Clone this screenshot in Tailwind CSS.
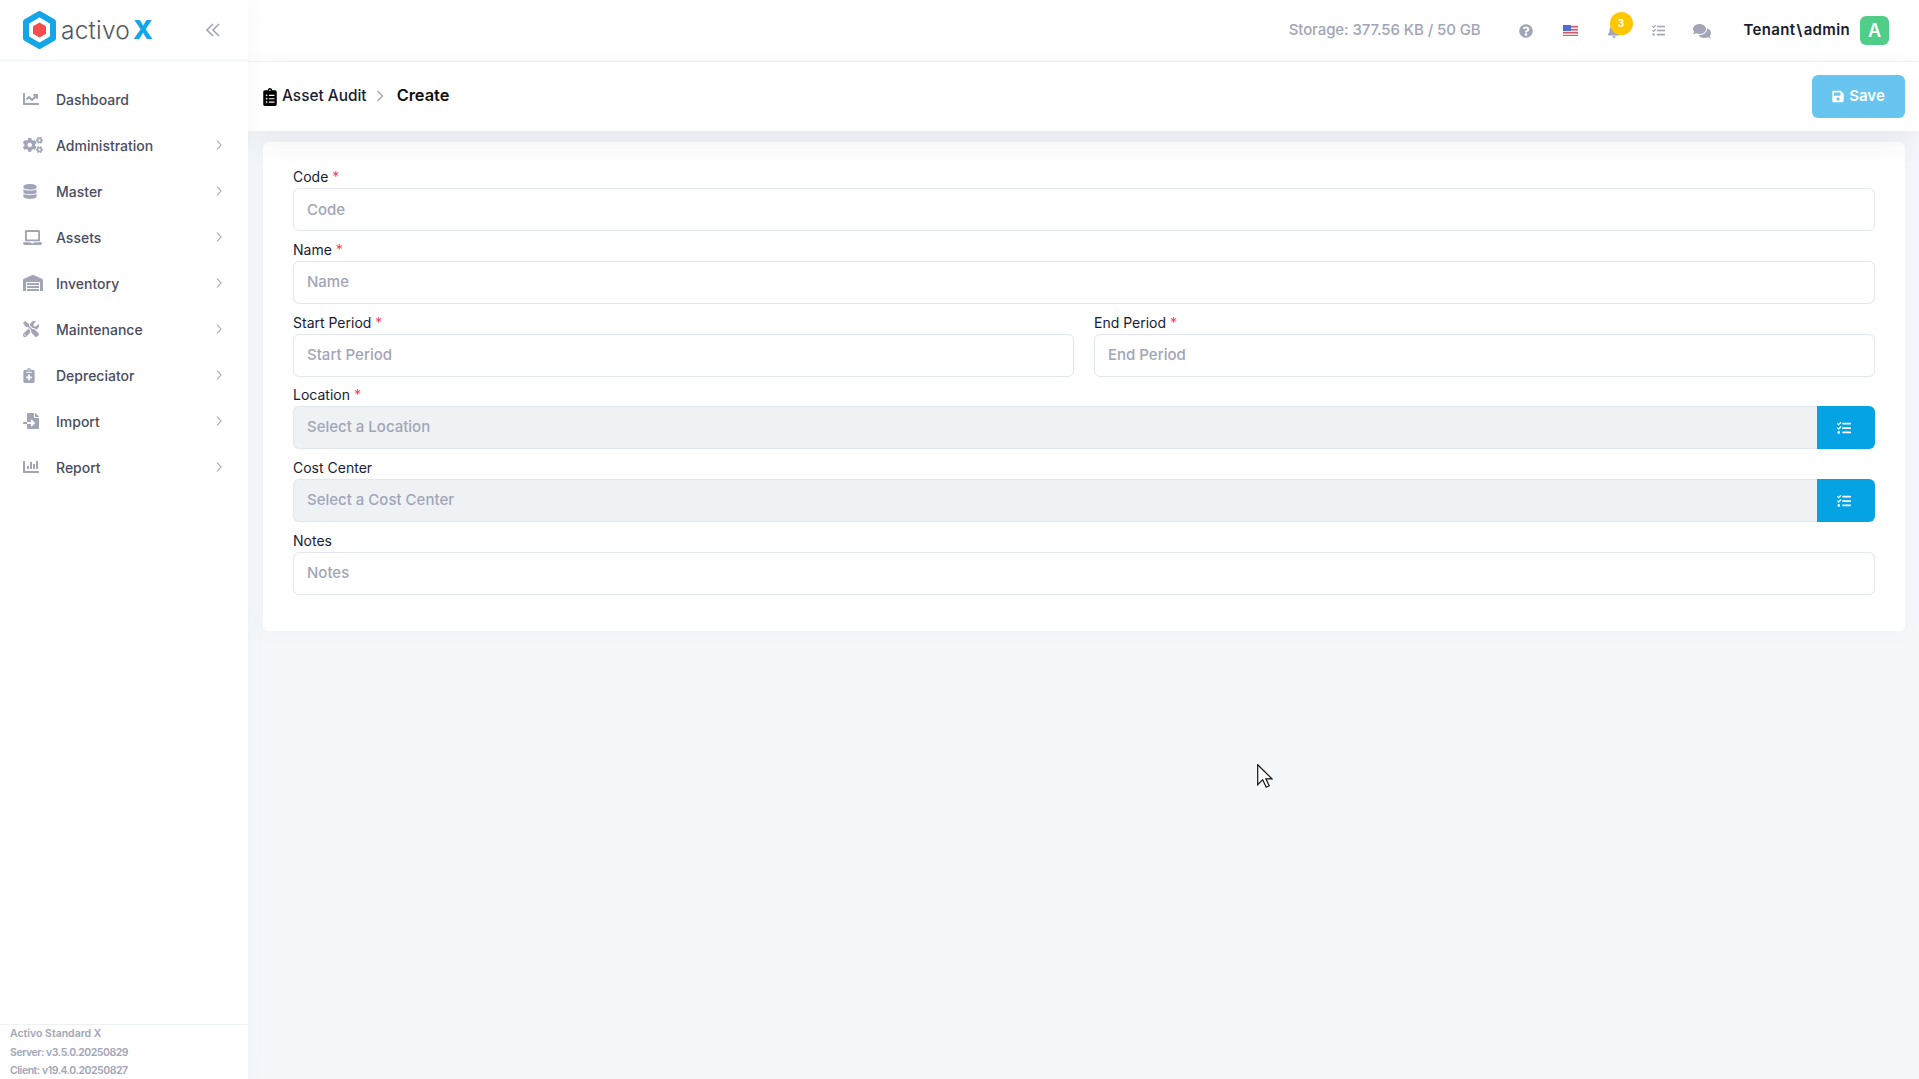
<!DOCTYPE html>
<html>
<head>
<meta charset="utf-8">
<script src="https://cdn.jsdelivr.net/npm/@tailwindcss/browser@4"></script>
</head>
<body class="font-['Inter','Noto_Sans',sans-serif] text-[#181c32]">
<div class="relative flex h-[1079px] w-[1919px] overflow-hidden bg-[#f5f8fb]">
  <aside class="z-10 flex h-full w-[248px] shrink-0 flex-col bg-white shadow-[0_0_20px_rgba(76,87,125,0.05)]">
    <div class="flex h-[61px] shrink-0 items-center border-b border-[#eff2f5] pl-[23px] pr-[28px]">
      <svg class="h-[38px] w-[33px] shrink-0" viewBox="0 0 33 38"><path d="M16.5 3 30 10.800v16.400L16.500 35 3 27.200V10.800z" fill="#fff" stroke="#12a5e8" stroke-width="6" stroke-linejoin="round"/><path d="M16.500 11.500 23 15.200v7.600l-6.500 3.700-6.500-3.700v-7.600z" fill="#f84b4b"/></svg>
      <span class="ml-[5px] text-[24.500px] leading-none font-light tracking-[0.2px] text-[#55565f]">activo</span><span class="ml-[3px] text-[26px] leading-none font-extrabold text-[#12a5e8]">X</span>
      <svg class="ml-auto h-[14px] w-[14px] text-[#a1a5b7]" viewBox="0 0 14 14" fill="none" stroke="currentColor" stroke-width="1.6"><path d="M7 1 1 7l6 6M13 1 7 7l6 6"/></svg>
    </div>
    <nav class="flex flex-col pt-[15px] text-[14px] font-medium text-[#4b4c5e]">
      <a class="flex h-[46px] items-center pl-[23px] pr-[26px]"><span class="flex w-[33px] shrink-0"><svg class="h-[16px] w-[16px] fill-[#a1a5b7]" viewBox="0 0 512 512"><path d="M496 384H64V80c0-8.84-7.16-16-16-16H16C7.16 64 0 71.16 0 80v336c0 17.67 14.33 32 32 32h464c8.84 0 16-7.16 16-16v-32c0-8.84-7.16-16-16-16zM464 96H345.94c-21.38 0-32.09 25.85-16.97 40.97l32.4 32.4L288 242.75l-73.37-73.37c-12.5-12.5-32.76-12.5-45.25 0l-68.69 68.69c-6.25 6.25-6.25 16.38 0 22.63l22.62 22.62c6.25 6.25 16.38 6.25 22.63 0L192 237.25l73.37 73.37c12.5 12.5 32.76 12.5 45.25 0l96-96 32.4 32.4c15.12 15.12 40.97 4.41 40.97-16.97V112c.01-8.84-7.15-16-15.99-16z"/></svg></span><span>Dashboard</span></a>
      <a class="flex h-[46px] items-center pl-[23px] pr-[26px]"><span class="flex w-[33px] shrink-0"><svg class="h-[16px] w-[20px] fill-[#a1a5b7]" viewBox="0 0 640 512"><path d="M512.1 191l-8.2 14.3c-3 5.3-9.4 7.5-15.1 5.4-11.8-4.4-22.6-10.7-32.1-18.6-4.6-3.8-5.8-10.5-2.8-15.7l8.2-14.3c-6.9-8-12.3-17.3-15.9-27.4h-16.5c-6 0-11.2-4.3-12.2-10.3-2-12-2.1-24.6 0-37.1 1-6 6.2-10.4 12.2-10.4h16.5c3.6-10.1 9-19.4 15.9-27.4l-8.2-14.3c-3-5.2-1.9-11.9 2.8-15.7 9.5-7.9 20.4-14.2 32.1-18.6 5.7-2.1 12.1.1 15.1 5.4l8.2 14.3c10.5-1.9 21.2-1.9 31.7 0L552 6.3c3-5.3 9.4-7.5 15.1-5.4 11.8 4.4 22.6 10.7 32.1 18.6 4.6 3.8 5.8 10.5 2.8 15.7l-8.2 14.3c6.9 8 12.3 17.3 15.9 27.4h16.5c6 0 11.2 4.3 12.2 10.3 2 12 2.1 24.6 0 37.1-1 6-6.2 10.4-12.2 10.4h-16.5c-3.6 10.1-9 19.4-15.9 27.4l8.2 14.3c3 5.2 1.9 11.9-2.8 15.7-9.5 7.9-20.4 14.2-32.1 18.6-5.7 2.1-12.1-.1-15.1-5.4l-8.2-14.3c-10.4 1.9-21.2 1.9-31.7 0zm-10.5-58.8c38.5 29.6 82.4-14.3 52.8-52.8-38.5-29.7-82.4 14.3-52.8 52.8zM386.3 286.1l33.7 16.8c10.1 5.8 14.5 18.1 10.5 29.1-8.9 24.2-26.4 46.4-42.6 65.8-7.4 8.9-20.2 11.1-30.3 5.3l-29.1-16.8c-16 13.7-34.6 24.6-54.9 31.7v33.6c0 11.6-8.3 21.6-19.7 23.6-24.6 4.2-50.4 4.4-75.9 0-11.5-2-20-11.9-20-23.6V418c-20.3-7.2-38.9-18-54.9-31.7L74 403c-10 5.8-22.9 3.6-30.3-5.3-16.2-19.4-33.3-41.6-42.2-65.7-4-10.9.4-23.2 10.5-29.1l33.3-16.8c-3.9-20.9-3.9-42.4 0-63.4L12 205.8c-10.1-5.8-14.6-18.1-10.5-29 8.9-24.2 26-46.4 42.2-65.8 7.4-8.9 20.2-11.1 30.3-5.3l29.1 16.8c16-13.7 34.6-24.6 54.9-31.7V57.1c0-11.5 8.2-21.5 19.6-23.5 24.6-4.2 50.5-4.4 76-.1 11.5 2 20 11.9 20 23.6v33.6c20.3 7.2 38.9 18 54.9 31.7l29.1-16.8c10-5.8 22.9-3.6 30.3 5.3 16.2 19.4 33.2 41.6 42.1 65.8 4 10.9.1 23.2-10 29.1l-33.7 16.8c3.9 21 3.9 42.5 0 63.5zm-117.6 21.1c59.2-77-28.7-164.9-105.7-105.7-59.2 77 28.7 164.9 105.7 105.7zm243.4 182.7l-8.2 14.3c-3 5.3-9.4 7.5-15.1 5.4-11.8-4.4-22.6-10.7-32.1-18.6-4.6-3.8-5.8-10.5-2.8-15.7l8.2-14.3c-6.9-8-12.3-17.3-15.9-27.4h-16.5c-6 0-11.2-4.3-12.2-10.3-2-12-2.1-24.6 0-37.1 1-6 6.2-10.4 12.2-10.4h16.5c3.6-10.1 9-19.4 15.9-27.4l-8.2-14.3c-3-5.2-1.9-11.9 2.8-15.7 9.5-7.9 20.4-14.2 32.1-18.6 5.7-2.1 12.1.1 15.1 5.4l8.2 14.3c10.5-1.9 21.2-1.9 31.7 0l8.2-14.3c3-5.3 9.4-7.5 15.1-5.4 11.8 4.4 22.6 10.7 32.1 18.6 4.6 3.8 5.8 10.5 2.8 15.7l-8.2 14.3c6.9 8 12.3 17.3 15.9 27.4h16.5c6 0 11.2 4.3 12.2 10.3 2 12 2.1 24.6 0 37.1-1 6-6.2 10.4-12.2 10.4h-16.5c-3.6 10.1-9 19.4-15.9 27.4l8.2 14.3c3 5.2 1.9 11.9-2.8 15.7-9.5 7.9-20.4 14.2-32.1 18.6-5.7 2.1-12.1-.1-15.1-5.4l-8.2-14.3c-10.4 1.9-21.2 1.9-31.7 0zM501.6 431c38.5 29.6 82.4-14.3 52.8-52.8-38.5-29.6-82.4 14.3-52.8 52.8z"/></svg></span><span>Administration</span><svg class="ml-auto h-[10px] w-[6px] text-[#a1a5b7]" viewBox="0 0 6 10" fill="none" stroke="currentColor" stroke-width="1.1"><path d="m1 .5 4 4.5-4 4.5"/></svg></a>
      <a class="flex h-[46px] items-center pl-[23px] pr-[26px]"><span class="flex w-[33px] shrink-0"><svg class="h-[15px] w-[14px] fill-[#a1a5b7]" viewBox="0 0 448 512"><path d="M448 73.143v45.714C448 159.143 347.667 192 224 192S0 159.143 0 118.857V73.143C0 32.857 100.333 0 224 0s224 32.857 224 73.143zM448 176v102.857C448 319.143 347.667 352 224 352S0 319.143 0 278.857V176c48.125 33.143 136.208 48.572 224 48.572S399.874 209.143 448 176zm0 160v102.857C448 479.143 347.667 512 224 512S0 479.143 0 438.857V336c48.125 33.143 136.208 48.572 224 48.572S399.874 369.143 448 336z"/></svg></span><span>Master</span><svg class="ml-auto h-[10px] w-[6px] text-[#a1a5b7]" viewBox="0 0 6 10" fill="none" stroke="currentColor" stroke-width="1.1"><path d="m1 .5 4 4.5-4 4.5"/></svg></a>
      <a class="flex h-[46px] items-center pl-[23px] pr-[26px]"><span class="flex w-[33px] shrink-0"><svg class="h-[15px] w-[19px] fill-[#a1a5b7]" viewBox="0 0 640 512"><path d="M624 416H381.54c-.74 19.81-14.71 32-32.74 32H288c-18.69 0-33.02-17.47-32.77-32H16c-8.8 0-16 7.2-16 16v16c0 35.2 28.8 64 64 64h512c35.2 0 64-28.8 64-64v-16c0-8.8-7.2-16-16-16zM576 48c0-26.4-21.6-48-48-48H112C85.6 0 64 21.6 64 48v336h512V48zm-64 272H128V64h384v256z"/></svg></span><span>Assets</span><svg class="ml-auto h-[10px] w-[6px] text-[#a1a5b7]" viewBox="0 0 6 10" fill="none" stroke="currentColor" stroke-width="1.1"><path d="m1 .5 4 4.5-4 4.5"/></svg></a>
      <a class="flex h-[46px] items-center pl-[23px] pr-[26px]"><span class="flex w-[33px] shrink-0"><svg class="h-[16px] w-[20px] fill-[#a1a5b7]" viewBox="0 0 640 512"><path d="M504 352H136.4c-4.4 0-8 3.6-8 8l-.1 48c0 4.4 3.6 8 8 8H504c4.4 0 8-3.6 8-8v-48c0-4.4-3.6-8-8-8zm0 96H136.1c-4.4 0-8 3.6-8 8l-.1 48c0 4.4 3.6 8 8 8h368c4.4 0 8-3.6 8-8v-48c0-4.4-3.6-8-8-8zm0-192H136.6c-4.4 0-8 3.6-8 8l-.1 48c0 4.4 3.6 8 8 8H504c4.4 0 8-3.6 8-8v-48c0-4.4-3.6-8-8-8zm106.5-139L338.4 3.7a48.15 48.15 0 0 0-36.9 0L29.5 117C11.7 124.5 0 141.9 0 161.3V504c0 4.4 3.6 8 8 8h80c4.4 0 8-3.6 8-8V256c0-17.6 14.6-32 32.6-32h382.8c18 0 32.6 14.4 32.6 32v248c0 4.4 3.6 8 8 8h80c4.4 0 8-3.6 8-8V161.3c0-19.4-11.7-36.8-29.5-44.3z"/></svg></span><span>Inventory</span><svg class="ml-auto h-[10px] w-[6px] text-[#a1a5b7]" viewBox="0 0 6 10" fill="none" stroke="currentColor" stroke-width="1.1"><path d="m1 .5 4 4.5-4 4.5"/></svg></a>
      <a class="flex h-[46px] items-center pl-[23px] pr-[26px]"><span class="flex w-[33px] shrink-0"><svg class="h-[16px] w-[16px] fill-[#a1a5b7]" viewBox="0 0 512 512"><path d="M501.1 395.7L384 278.6c-23.1-23.1-57.6-27.6-85.4-13.9L192 158.1V96L64 0 0 64l96 128h62.1l106.6 106.6c-13.6 27.8-9.2 62.3 13.9 85.4l117.1 117.1c14.6 14.6 38.2 14.6 52.7 0l52.7-52.7c14.5-14.6 14.5-38.2 0-52.7zM331.7 225c28.3 0 54.9 11 74.9 31l19.4 19.4c15.8-6.9 30.8-16.5 43.8-29.5 37.1-37.1 49.7-89.3 37.9-136.7-2.2-9-13.5-12.1-20.1-5.5l-74.4 74.4-67.9-11.3L334 98.9l74.4-74.4c6.6-6.6 3.4-17.9-5.7-20.2-47.4-11.7-99.6.9-136.6 37.9-28.5 28.5-41.9 66.1-41.2 103.6l82.1 82.1c8.1-1.9 16.5-2.9 24.7-2.9zm-103.9 82l-56.7-56.7L18.7 402.8c-25 25-25 65.5 0 90.5s65.5 25 90.5 0l123.6-123.6c-7.6-19.9-9.9-41.6-5-62.7zM64 472c-13.2 0-24-10.8-24-24 0-13.3 10.7-24 24-24s24 10.7 24 24c0 13.2-10.7 24-24 24z"/></svg></span><span>Maintenance</span><svg class="ml-auto h-[10px] w-[6px] text-[#a1a5b7]" viewBox="0 0 6 10" fill="none" stroke="currentColor" stroke-width="1.1"><path d="m1 .5 4 4.5-4 4.5"/></svg></a>
      <a class="flex h-[46px] items-center pl-[23px] pr-[26px]"><span class="flex w-[33px] shrink-0"><svg class="h-[15px] w-[12px] fill-[#a1a5b7]" viewBox="0 0 384 512"><path d="M336 64h-80c0-35.3-28.7-64-64-64s-64 28.7-64 64H48C21.5 64 0 85.5 0 112v352c0 26.5 21.5 48 48 48h288c26.5 0 48-21.5 48-48V112c0-26.5-21.5-48-48-48zM192 40c13.3 0 24 10.7 24 24s-10.7 24-24 24-24-10.7-24-24 10.7-24 24-24zm96 304c0 4.4-3.6 8-8 8h-56v56c0 4.4-3.6 8-8 8h-48c-4.4 0-8-3.6-8-8v-56h-56c-4.4 0-8-3.6-8-8v-48c0-4.4 3.6-8 8-8h56v-56c0-4.4 3.6-8 8-8h48c4.4 0 8 3.6 8 8v56h56c4.4 0 8 3.6 8 8v48zm0-192c0 4.4-3.6 8-8 8H104c-4.4 0-8-3.6-8-8v-16c0-4.4 3.6-8 8-8h176c4.4 0 8 3.6 8 8v16z"/></svg></span><span>Depreciator</span><svg class="ml-auto h-[10px] w-[6px] text-[#a1a5b7]" viewBox="0 0 6 10" fill="none" stroke="currentColor" stroke-width="1.1"><path d="m1 .5 4 4.5-4 4.5"/></svg></a>
      <a class="flex h-[46px] items-center pl-[23px] pr-[26px]"><span class="flex w-[33px] shrink-0"><svg class="h-[16px] w-[16px] fill-[#a1a5b7]" viewBox="0 0 512 512"><path d="M16 288c-8.8 0-16 7.2-16 16v32c0 8.8 7.2 16 16 16h112v-64zm489-183L407.1 7c-4.5-4.5-10.6-7-17-7H384v128h128v-6.1c0-6.3-2.5-12.4-7-16.9zm-153 31V0H152c-13.3 0-24 10.7-24 24v264h128v-65.2c0-14.3 17.3-21.4 27.4-11.3L379 308c6.6 6.7 6.6 17.4 0 24l-95.7 96.4c-10.1 10.1-27.4 3-27.4-11.3V352H128v136c0 13.3 10.7 24 24 24h336c13.3 0 24-10.7 24-24V160H376c-13.2 0-24-10.8-24-24z"/></svg></span><span>Import</span><svg class="ml-auto h-[10px] w-[6px] text-[#a1a5b7]" viewBox="0 0 6 10" fill="none" stroke="currentColor" stroke-width="1.1"><path d="m1 .5 4 4.5-4 4.5"/></svg></a>
      <a class="flex h-[46px] items-center pl-[23px] pr-[26px]"><span class="flex w-[33px] shrink-0"><svg class="h-[16px] w-[16px] fill-[#a1a5b7]" viewBox="0 0 512 512"><path d="M332.8 320h38.4c6.4 0 12.8-6.4 12.8-12.8V172.8c0-6.4-6.4-12.8-12.8-12.8h-38.4c-6.4 0-12.8 6.4-12.8 12.8v134.4c0 6.4 6.4 12.8 12.8 12.8zm96 0h38.4c6.4 0 12.8-6.4 12.8-12.8V76.8c0-6.4-6.4-12.8-12.8-12.8h-38.4c-6.4 0-12.8 6.4-12.8 12.8v230.4c0 6.4 6.4 12.8 12.8 12.8zm-288 0h38.4c6.4 0 12.8-6.4 12.8-12.8v-70.4c0-6.4-6.4-12.8-12.8-12.8h-38.4c-6.4 0-12.8 6.4-12.8 12.8v70.4c0 6.4 6.4 12.8 12.8 12.8zm96 0h38.4c6.4 0 12.8-6.4 12.8-12.8V108.8c0-6.4-6.4-12.8-12.8-12.8h-38.4c-6.4 0-12.8 6.4-12.8 12.8v198.4c0 6.4 6.4 12.8 12.8 12.8zM496 384H64V80c0-8.84-7.16-16-16-16H16C7.16 64 0 71.16 0 80v336c0 17.67 14.33 32 32 32h464c8.84 0 16-7.16 16-16v-32c0-8.84-7.16-16-16-16z"/></svg></span><span>Report</span><svg class="ml-auto h-[10px] w-[6px] text-[#a1a5b7]" viewBox="0 0 6 10" fill="none" stroke="currentColor" stroke-width="1.1"><path d="m1 .5 4 4.5-4 4.5"/></svg></a>
    </nav>
    <div class="mt-auto h-[55px] border-t border-[#eff2f5] pl-[10px] text-[10.5px] leading-[18.7px] font-semibold text-[#a1a5b7]">
      <div>Activo Standard X</div>
      <div class="tracking-[-0.45px]">Server: v3.5.0.20250829</div>
      <div class="tracking-[-0.45px]">Client: v19.4.0.20250827</div>
    </div>
  </aside>

  <main class="flex min-w-0 flex-1 flex-col">
    <header class="flex h-[62px] shrink-0 items-center border-b border-[#eff2f5] bg-white pr-[30px]">
      <span class="ml-auto text-[15px] font-medium tracking-[-0.1px] text-[#a1a5b7]">Storage: 377.56 KB / 50 GB</span>
      <svg class="ml-[38px] h-[14px] w-[14px] fill-[#a1a5b7]" viewBox="0 0 512 512"><path d="M504 256c0 136.997-111.043 248-248 248S8 392.997 8 256C8 119.083 119.043 8 256 8s248 111.083 248 248zM262.655 90c-54.497 0-89.255 22.957-116.549 63.758-3.536 5.286-2.353 12.415 2.715 16.258l34.699 26.31c5.205 3.947 12.621 3.008 16.665-2.122 17.864-22.658 30.113-35.797 57.303-35.797 20.429 0 45.698 13.148 45.698 32.958 0 14.976-12.363 22.667-32.534 33.976C247.128 238.528 216 254.941 216 296v4c0 6.627 5.373 12 12 12h56c6.627 0 12-5.373 12-12v-1.333c0-28.462 83.186-29.647 83.186-106.667 0-58.002-60.165-102-116.531-102zM256 338c-25.365 0-46 20.635-46 46 0 25.364 20.635 46 46 46s46-20.636 46-46c0-25.365-20.635-46-46-46z"/></svg>
      <svg class="ml-[30px] h-[11px] w-[15px]" viewBox="0 0 15 11"><rect width="15" height="11" fill="#f1e4e4"/><path d="M0 1h15v1.500H0zM0 4h15v1.500H0zM0 7h15v1.500H0zM0 10h15v1H0z" fill="#d6586a"/><rect width="8" height="6" fill="#4f6fd0"/></svg>
      <span class="relative ml-[29px] flex">
        <svg class="h-[14px] w-[14px] fill-[#a1a5b7]" viewBox="0 0 448 512"><path d="M224 512c35.32 0 63.97-28.65 63.97-64H160.03c0 35.35 28.65 64 63.97 64zm215.39-149.71c-19.32-20.76-55.47-51.99-55.47-154.29 0-77.7-54.48-139.9-127.94-155.16V32c0-17.67-14.32-32-31.98-32s-31.98 14.33-31.98 32v20.84C118.56 68.1 64.08 130.3 64.08 208c0 102.3-36.15 133.53-55.47 154.29-6 6.45-8.66 14.16-8.61 21.71.11 16.4 12.98 32 32.1 32h383.8c19.12 0 32-15.6 32.1-32 .05-7.55-2.61-15.27-8.61-21.71z"/></svg>
        <span class="absolute left-[3px] top-[-12px] flex h-[23px] w-[23px] items-center justify-center rounded-full bg-[#ffc700] text-[10px] font-bold text-white">3</span>
      </span>
      <svg class="ml-[31px] h-[13px] w-[13px] fill-[#a1a5b7]" viewBox="0 0 512 512"><path d="M139.61 35.5a12 12 0 0 0-17 0L58.93 98.81l-22.7-22.12a12 12 0 0 0-17 0L3.53 92.41a12 12 0 0 0 0 17l47.59 47.4a12.78 12.78 0 0 0 17.61 0l15.59-15.62L156.52 69a12.09 12.09 0 0 0 .09-17zm0 159.19a12 12 0 0 0-17 0l-63.68 63.72-22.7-22.1a12 12 0 0 0-17 0L3.53 252a12 12 0 0 0 0 17L51 316.5a12.77 12.77 0 0 0 17.6 0l15.7-15.69 72.2-72.22a12 12 0 0 0 .09-16.9zM64 368c-26.49 0-48.59 21.5-48.59 48S37.53 464 64 464a48 48 0 0 0 0-96zm432 16H208a16 16 0 0 0-16 16v32a16 16 0 0 0 16 16h288a16 16 0 0 0 16-16v-32a16 16 0 0 0-16-16zm0-320H208a16 16 0 0 0-16 16v32a16 16 0 0 0 16 16h288a16 16 0 0 0 16-16V80a16 16 0 0 0-16-16zm0 160H208a16 16 0 0 0-16 16v32a16 16 0 0 0 16 16h288a16 16 0 0 0 16-16v-32a16 16 0 0 0-16-16z"/></svg>
      <svg class="ml-[28px] h-[16px] w-[18px] fill-[#a1a5b7]" viewBox="0 0 576 512"><path d="M416 192c0-88.4-93.1-160-208-160S0 103.6 0 192c0 34.3 14.1 65.9 38 92-13.4 30.2-35.5 54.2-35.8 54.5-2.2 2.3-2.8 5.7-1.5 8.7S4.8 352 8 352c36.6 0 66.9-12.3 88.7-25 32.2 15.7 70.3 25 111.3 25 114.9 0 208-71.6 208-160zm122 220c23.9-26 38-57.7 38-92 0-66.9-53.5-124.2-129.3-148.1.9 6.6 1.3 13.3 1.3 20.1 0 105.9-107.7 192-240 192-10.8 0-21.3-.8-31.7-1.9C207.8 439.6 281.8 480 368 480c41 0 79.1-9.2 111.3-25 21.8 12.7 52.1 25 88.7 25 3.2 0 6.1-1.9 7.3-4.8 1.3-2.9.7-6.3-1.5-8.7-.3-.3-22.4-24.2-35.8-54.5z"/></svg>
      <span class="ml-[33px] text-[15px] font-semibold tracking-[0.35px] text-[#181c32]">Tenant<span class="mx-[1px] font-bold">\</span>admin</span>
      <span class="ml-[10px] flex h-[29px] w-[29px] items-center justify-center rounded-[6px] bg-[#50cd89] text-[18px] font-semibold text-white">A</span>
    </header>
    <div class="relative z-[1] flex h-[69px] shrink-0 items-center bg-white pl-[15px] pr-[14px] shadow-[0_10px_30px_0_rgba(82,63,105,0.07)]">
      <svg class="h-[18px] w-[14px] shrink-0 fill-black" viewBox="0 0 384 512"><path d="M336 64h-80c0-35.3-28.7-64-64-64s-64 28.7-64 64H48C21.5 64 0 85.5 0 112v352c0 26.5 21.5 48 48 48h288c26.5 0 48-21.5 48-48V112c0-26.5-21.5-48-48-48zM96 424c-13.3 0-24-10.7-24-24s10.7-24 24-24 24 10.7 24 24-10.7 24-24 24zm0-96c-13.3 0-24-10.7-24-24s10.7-24 24-24 24 10.7 24 24-10.7 24-24 24zm0-96c-13.3 0-24-10.7-24-24s10.7-24 24-24 24 10.7 24 24-10.7 24-24 24zm96-192c13.3 0 24 10.7 24 24s-10.7 24-24 24-24-10.7-24-24 10.7-24 24-24zm128 368c0 4.4-3.6 8-8 8H168c-4.4 0-8-3.6-8-8v-16c0-4.4 3.6-8 8-8h144c4.4 0 8 3.6 8 8v16zm0-96c0 4.4-3.6 8-8 8H168c-4.4 0-8-3.6-8-8v-16c0-4.4 3.6-8 8-8h144c4.4 0 8 3.6 8 8v16zm0-96c0 4.4-3.6 8-8 8H168c-4.4 0-8-3.6-8-8v-16c0-4.4 3.6-8 8-8h144c4.4 0 8 3.6 8 8v16z"/></svg>
      <span class="ml-[5px] mb-[2px] text-[15.4px] font-medium text-[#181c32]">Asset Audit</span>
      <svg class="ml-[9px] mb-[1px] h-[12px] w-[8px] text-[#a1a5b7]" viewBox="0 0 8 12" fill="none" stroke="currentColor" stroke-width="1.4"><path d="m1.500 1 5 5-5 5"/></svg>
      <span class="ml-[13px] mb-[2px] text-[16.400px] font-semibold text-[#111]">Create</span>
      <button class="ml-auto flex h-[43px] w-[93px] items-center justify-center gap-[5px] rounded-[6px] bg-[#67c5f0] text-[15px] font-semibold text-white">
        <svg class="h-[13px] w-[12px] fill-white" viewBox="0 0 448 512"><path d="M433.941 129.941l-83.882-83.882A48 48 0 0 0 316.118 32H48C21.49 32 0 53.49 0 80v352c0 26.51 21.49 48 48 48h352c26.51 0 48-21.49 48-48V163.882a48 48 0 0 0-14.059-33.941zM224 416c-35.346 0-64-28.654-64-64 0-35.346 28.654-64 64-64s64 28.654 64 64c0 35.346-28.654 64-64 64zm96-304.52V212c0 6.627-5.373 12-12 12H76c-6.627 0-12-5.373-12-12V108c0-6.627 5.373-12 12-12h228.52c3.183 0 6.235 1.264 8.485 3.515l3.48 3.48A11.996 11.996 0 0 1 320 111.48z"/></svg>
        Save
      </button>
    </div>
    <div class="flex-1 pl-[15px] pr-[14px] pt-[11px]">
      <form class="flex flex-col gap-[8.8px] rounded-[6px] bg-white px-[30px] pb-[36px] pt-[25px] shadow-[0_0_20px_0_rgba(76,87,125,0.05)]">
        <div class="flex flex-col">
          <label class="h-[21px] text-[14px] leading-[20px]">Code <span class="text-[#f1416c]">*</span></label>
          <input class="h-[43px] w-full rounded-[6px] border border-[#e4e6ef] bg-white px-[13px] pb-[1px] text-[15px] font-medium outline-none placeholder:text-[#a1a5b7]" placeholder="Code">
        </div>
        <div class="flex flex-col">
          <label class="h-[21px] text-[14px] leading-[20px]">Name <span class="text-[#f1416c]">*</span></label>
          <input class="h-[43px] w-full rounded-[6px] border border-[#e4e6ef] bg-white px-[13px] pb-[1px] text-[15px] font-medium outline-none placeholder:text-[#a1a5b7]" placeholder="Name">
        </div>
        <div class="flex gap-[20px]">
          <div class="flex flex-1 flex-col">
            <label class="h-[21px] text-[14px] leading-[20px]">Start Period <span class="text-[#f1416c]">*</span></label>
            <input class="h-[43px] w-full rounded-[6px] border border-[#e4e6ef] bg-white px-[13px] pb-[1px] text-[15px] font-medium outline-none placeholder:text-[#a1a5b7]" placeholder="Start Period">
          </div>
          <div class="flex flex-1 flex-col">
            <label class="h-[21px] text-[14px] leading-[20px]">End Period <span class="text-[#f1416c]">*</span></label>
            <input class="h-[43px] w-full rounded-[6px] border border-[#e4e6ef] bg-white px-[13px] pb-[1px] text-[15px] font-medium outline-none placeholder:text-[#a1a5b7]" placeholder="End Period">
          </div>
        </div>
        <div class="flex flex-col">
          <label class="h-[21px] text-[14px] leading-[20px]">Location <span class="text-[#f1416c]">*</span></label>
          <div class="flex h-[43px]">
            <input class="min-w-0 flex-1 rounded-l-[6px] border border-r-0 border-[#e4e6ef] bg-[#eff2f5] px-[13px] pb-[1px] text-[15px] font-medium outline-none placeholder:text-[#a1a5b7]" placeholder="Select a Location" readonly>
            <button type="button" class="flex w-[58px] items-center justify-center rounded-r-[6px] bg-[#05a3e4]"><svg class="mr-[4px] h-[14px] w-[14px] fill-white" viewBox="0 0 512 512"><path d="M139.61 35.5a12 12 0 0 0-17 0L58.93 98.81l-22.7-22.12a12 12 0 0 0-17 0L3.53 92.41a12 12 0 0 0 0 17l47.59 47.4a12.78 12.78 0 0 0 17.61 0l15.59-15.62L156.52 69a12.09 12.09 0 0 0 .09-17zm0 159.19a12 12 0 0 0-17 0l-63.68 63.72-22.7-22.1a12 12 0 0 0-17 0L3.53 252a12 12 0 0 0 0 17L51 316.5a12.77 12.77 0 0 0 17.6 0l15.7-15.69 72.2-72.22a12 12 0 0 0 .09-16.9zM64 368c-26.49 0-48.59 21.5-48.59 48S37.53 464 64 464a48 48 0 0 0 0-96zm432 16H208a16 16 0 0 0-16 16v32a16 16 0 0 0 16 16h288a16 16 0 0 0 16-16v-32a16 16 0 0 0-16-16zm0-320H208a16 16 0 0 0-16 16v32a16 16 0 0 0 16 16h288a16 16 0 0 0 16-16V80a16 16 0 0 0-16-16zm0 160H208a16 16 0 0 0-16 16v32a16 16 0 0 0 16 16h288a16 16 0 0 0 16-16v-32a16 16 0 0 0-16-16z"/></svg></button>
          </div>
        </div>
        <div class="flex flex-col">
          <label class="h-[21px] text-[14px] leading-[20px]">Cost Center</label>
          <div class="flex h-[43px]">
            <input class="min-w-0 flex-1 rounded-l-[6px] border border-r-0 border-[#e4e6ef] bg-[#eff2f5] px-[13px] pb-[1px] text-[15px] font-medium outline-none placeholder:text-[#a1a5b7]" placeholder="Select a Cost Center" readonly>
            <button type="button" class="flex w-[58px] items-center justify-center rounded-r-[6px] bg-[#05a3e4]"><svg class="mr-[4px] h-[14px] w-[14px] fill-white" viewBox="0 0 512 512"><path d="M139.61 35.5a12 12 0 0 0-17 0L58.93 98.81l-22.7-22.12a12 12 0 0 0-17 0L3.53 92.41a12 12 0 0 0 0 17l47.59 47.4a12.78 12.78 0 0 0 17.61 0l15.59-15.62L156.52 69a12.09 12.09 0 0 0 .09-17zm0 159.19a12 12 0 0 0-17 0l-63.68 63.72-22.7-22.1a12 12 0 0 0-17 0L3.53 252a12 12 0 0 0 0 17L51 316.5a12.77 12.77 0 0 0 17.6 0l15.7-15.69 72.2-72.22a12 12 0 0 0 .09-16.9zM64 368c-26.49 0-48.59 21.5-48.59 48S37.53 464 64 464a48 48 0 0 0 0-96zm432 16H208a16 16 0 0 0-16 16v32a16 16 0 0 0 16 16h288a16 16 0 0 0 16-16v-32a16 16 0 0 0-16-16zm0-320H208a16 16 0 0 0-16 16v32a16 16 0 0 0 16 16h288a16 16 0 0 0 16-16V80a16 16 0 0 0-16-16zm0 160H208a16 16 0 0 0-16 16v32a16 16 0 0 0 16 16h288a16 16 0 0 0 16-16v-32a16 16 0 0 0-16-16z"/></svg></button>
          </div>
        </div>
        <div class="flex flex-col">
          <label class="h-[21px] text-[14px] leading-[20px]">Notes</label>
          <input class="h-[43px] w-full rounded-[6px] border border-[#e4e6ef] bg-white px-[13px] pb-[1px] text-[15px] font-medium outline-none placeholder:text-[#a1a5b7]" placeholder="Notes">
        </div>
      </form>
    </div>
  </main>
  <svg class="absolute left-[1257px] top-[764px] z-20 h-[24px] w-[16px]" viewBox="0 0 16 24"><path d="M.7.7v20l5-5 3.500 7.500 3-1.400-3.300-7H15z" fill="#fff" stroke="#111" stroke-width="1.200"/></svg>
</div>
</body>
</html>
